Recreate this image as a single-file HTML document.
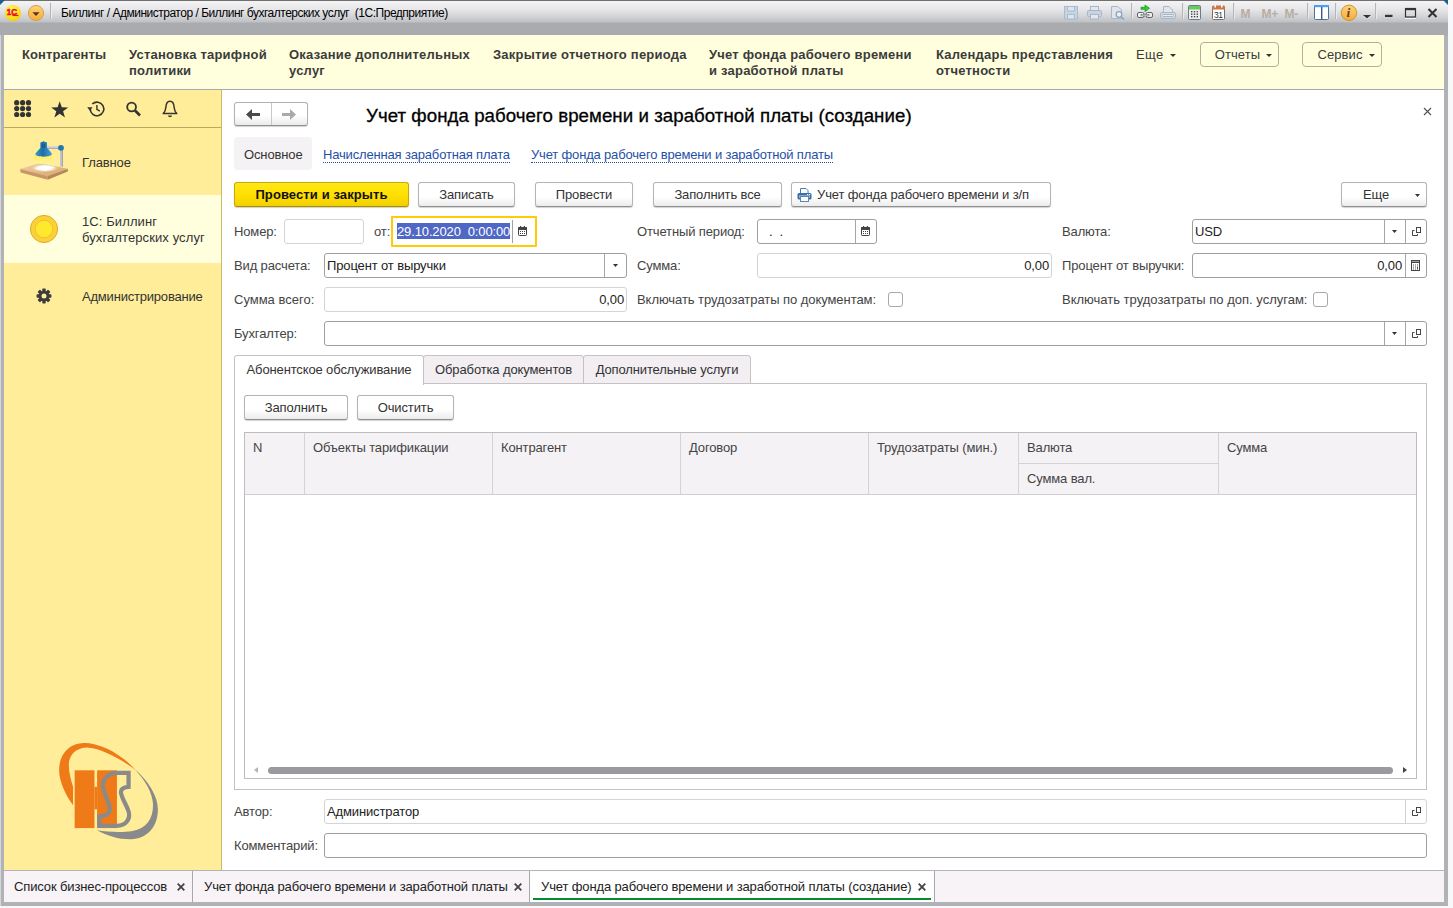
<!DOCTYPE html>
<html lang="ru">
<head>
<meta charset="utf-8">
<title>Биллинг</title>
<style>
*{box-sizing:border-box;margin:0;padding:0}
html,body{width:1453px;height:908px;overflow:hidden;background:#f8f8fa}
body{font-family:"Liberation Sans",sans-serif;font-size:13px;color:#333;position:relative;letter-spacing:-.13px}
.abs{position:absolute}
#frame{position:absolute;left:0;top:0;width:1448px;height:906px;background:#b1b2b5}
#titlebar{position:absolute;left:0;top:0;width:1448px;height:35px;background:linear-gradient(#707070 0,#707070 1px,#f4f4f5 1px,#e8e8ea 9px,#d4d5d8 16px,#bfc1c5 22px,#a9abaf 23px,#a9abaf 35px)}
#tbtext{position:absolute;left:61px;top:6px;font-size:12px;line-height:14px;color:#000;letter-spacing:-.49px;white-space:nowrap}
#sections{position:absolute;left:4px;top:35px;width:1440px;height:55px;background:#ffffde;border-bottom:1px solid #a9a9a9}
.sec{position:absolute;top:12px;font-weight:bold;font-size:13px;line-height:16px;color:#3b3b3b;white-space:nowrap;letter-spacing:.22px}
.secbtn{position:absolute;top:7px;height:25px;padding-left:8px;letter-spacing:.1px;border:1px solid #b3b095;border-radius:4px;font-size:13px;line-height:23px;color:#3b3b3b;text-align:center;background:#ffffde}
.caret{display:inline-block;width:0;height:0;border-left:3px solid transparent;border-right:3px solid transparent;border-top:3px solid #333;vertical-align:middle;margin-left:6px;position:relative;top:0}
#left{position:absolute;left:4px;top:90px;width:218px;height:781px;background:#ffed9a;border-right:1px solid #c9b96a}
#lefttools{position:absolute;left:0;top:0;width:217px;height:38px;border-bottom:1px solid #b9a95e}
.navitem{position:absolute;left:0;width:217px;height:67px;font-size:13px;line-height:16px;color:#333}
.navitem .t{position:absolute;left:78px;margin-top:1px}
#main{position:absolute;left:222px;top:90px;width:1222px;height:781px;background:#fff}
#bottombar{position:absolute;left:4px;top:870px;width:1440px;height:32px;background:#f7f3f7;border-top:1px solid #b4b4b8}
.btab{position:absolute;top:0;height:31px;line-height:31px;font-size:13px;color:#222;white-space:nowrap;border-right:1px solid #a9a9ad;padding-left:10px}
.btab .x{position:absolute;top:0;font-weight:bold;font-size:12px}
.lbl{position:absolute;margin-top:1px;font-size:13px;line-height:16px;color:#444;white-space:nowrap}
.fld{position:absolute;height:25px;border:1px solid #d4d4d4;border-radius:3px;background:#fff;font-size:13px;line-height:23px;color:#222;white-space:nowrap;padding:0 2px}
.fld.dk{border-color:#9f9f9f}
.btn{position:absolute;height:25px;border:1px solid #b4b4b4;border-bottom-color:#8f8f8f;border-radius:3px;background:linear-gradient(#fff,#fff 60%,#ececec);font-size:13px;line-height:23px;color:#333;text-align:center;white-space:nowrap;box-shadow:0 1px 1px rgba(0,0,0,.18)}
.chk{position:absolute;width:15px;height:15px;border:1px solid #a8a8a8;border-radius:3px;background:#fff}
.sep{position:absolute;top:0;width:1px;height:23px;background:#d0d0d0}
.dk .sep{background:#a6a6a6}
.dd{position:absolute;width:5px;height:3px;background:#333;clip-path:polygon(0 0,100% 0,50% 100%)}
.lnk{color:#1f50a8;border-bottom:1px dotted #1f50a8;line-height:15px;letter-spacing:-.17px}
.tab{position:absolute;top:355px;height:29px;border:1px solid #c3c3c3;background:#f2eef2;font-size:13px;line-height:27px;color:#333;text-align:center;white-space:nowrap;border-radius:3px 3px 0 0}
.vl{position:absolute;top:0;width:1px;height:62px;background:#d3d3d3}
</style>
</head>
<body>
<div id="frame"><div class="abs" style="left:0;top:23px;width:1px;height:883px;background:#d6d6d8"></div></div>
<div id="titlebar">
  <div class="abs" style="left:0;top:0;width:5px;height:5px;background:#1d5f8a;clip-path:polygon(0 0,100% 0,0 100%)"></div><div class="abs" style="left:1443px;top:0;width:5px;height:5px;background:#1d5f8a;clip-path:polygon(0 0,100% 0,100% 100%)"></div>
  <svg class="abs" style="left:0;top:0" width="1448" height="35" viewBox="0 0 1448 35" font-family="Liberation Sans, sans-serif">
    <defs>
      <radialGradient id="g1c" cx=".45" cy=".35" r=".7"><stop offset="0" stop-color="#fff78a"/><stop offset=".6" stop-color="#ffe420"/><stop offset="1" stop-color="#f5c800"/></radialGradient>
      <linearGradient id="gor" x1="0" y1="0" x2="0" y2="1"><stop offset="0" stop-color="#ffd27a"/><stop offset="1" stop-color="#fbab35"/></linearGradient>
    </defs>
    <circle cx="13" cy="13" r="8" fill="url(#g1c)"/>
    <text x="6.800" y="15.200" font-size="8.200" font-weight="bold" fill="#e8141c" stroke="#e8141c" stroke-width=".55" letter-spacing="-.2">1С</text>
    <rect x="12.400" y="14.800" width="6" height="1.300" fill="#e8141c"/>
    <circle cx="36" cy="13" r="7.6" fill="url(#gor)" stroke="#c9a040" stroke-width=".9"/>
    <path d="M32.4 12.3 H39.6 L36 16 Z" fill="#4a3a20"/>
    <rect x="50" y="3" width="1" height="16" fill="#b4b5b8"/><rect x="51" y="3" width="1" height="16" fill="#eeeef0"/>
    <g fill="#b4b5b8">
      <rect x="1131" y="3" width="1" height="16"/><rect x="1182" y="3" width="1" height="16"/><rect x="1233" y="3" width="1" height="16"/><rect x="1307" y="3" width="1" height="16"/><rect x="1335" y="3" width="1" height="16"/><rect x="1375" y="3" width="1" height="16"/>
    </g>
    <g fill="#e9e9eb">
      <rect x="1132" y="3" width="1" height="16"/><rect x="1183" y="3" width="1" height="16"/><rect x="1234" y="3" width="1" height="16"/><rect x="1308" y="3" width="1" height="16"/><rect x="1336" y="3" width="1" height="16"/><rect x="1376" y="3" width="1" height="16"/>
    </g>
    <!-- save (disabled) -->
    <g stroke="#a9bbd0" fill="#c9d4e2" stroke-width="1">
      <rect x="1064.5" y="6.5" width="13" height="12.5"/>
      <rect x="1067.5" y="6.5" width="7" height="4.5" fill="#dde4ec"/>
      <rect x="1067.5" y="14.5" width="7" height="4.5" fill="#dde4ec"/>
    </g>
    <!-- printer (disabled) -->
    <g stroke="#a7b6c8" fill="#c9d3df" stroke-width="1">
      <rect x="1090.5" y="6.5" width="8" height="5" fill="#e4e8ee"/>
      <rect x="1087.5" y="10.5" width="14" height="6" rx="1"/>
      <rect x="1090.500" y="14.500" width="8" height="4.500" fill="#e4e8ee"/>
    </g>
    <!-- preview (disabled) -->
    <g stroke="#a7b6c8" fill="#e0e5ec" stroke-width="1">
      <path d="M1111.500 6.500 H1118 L1121.500 10 V18.500 H1111.500 Z"/>
      <circle cx="1119" cy="14.500" r="2.800" fill="#eef1f5" stroke="#8fa3bb" stroke-width="1.300"/>
      <path d="M1121 16.500 L1124 19.500" stroke="#8fa3bb" stroke-width="1.600"/>
    </g>
    <!-- link with arrow -->
    <path d="M1141 7.300 H1145 V5 L1149.500 8.300 L1145 11.600 V9.300 H1141 Z" fill="#2ed02e" stroke="#0f8f1a" stroke-width=".7"/>
    <g fill="#f2f2f2" stroke="#5f6368" stroke-width="1">
      <rect x="1137.500" y="12.500" width="6.500" height="5" rx="1.500"/><rect x="1146" y="12.500" width="6.500" height="5" rx="1.500"/>
    </g>
    <rect x="1141" y="14.300" width="8" height="1.600" fill="#f8f8f8" stroke="#5f6368" stroke-width=".6"/>
    <!-- disabled link/print -->
    <g stroke="#a9b6c6" fill="#d4dbe4" stroke-width="1">
      <path d="M1163.500 6.500 H1169 L1172.500 10 V14 H1163.500 Z" fill="#e3e7ed"/>
      <rect x="1160.500" y="12.500" width="15" height="6" rx="1.500"/>
      <rect x="1163" y="14.500" width="10" height="2" fill="#e8ecf0"/>
    </g>
    <!-- calculator -->
    <rect x="1188.500" y="5.500" width="12" height="14" rx="1" fill="#eceff1" stroke="#6f7a84" stroke-width="1"/>
    <rect x="1189" y="6" width="11" height="3.500" fill="#5fce5f"/>
    <g fill="#444"><rect x="1191" y="11" width="1.400" height="1.400"/><rect x="1193.800" y="11" width="1.400" height="1.400"/><rect x="1191" y="13.500" width="1.400" height="1.400"/><rect x="1193.800" y="13.500" width="1.400" height="1.400"/><rect x="1196.600" y="13.500" width="1.400" height="1.400"/><rect x="1191" y="16" width="1.400" height="1.400"/><rect x="1193.800" y="16" width="1.400" height="1.400"/><rect x="1196.600" y="16" width="1.400" height="1.400"/></g>
    <rect x="1196.600" y="11" width="1.400" height="1.400" fill="#e02020"/>
    <!-- calendar -->
    <rect x="1212.500" y="6.500" width="12" height="13" rx="1" fill="#fff" stroke="#7a7068" stroke-width="1"/>
    <path d="M1212 7 Q1212 5.500 1213.500 5.500 H1223.500 Q1225 5.500 1225 7 V9.500 H1212 Z" fill="#c9774a"/>
    <rect x="1214.500" y="4.500" width="1.500" height="3" fill="#fff"/><rect x="1221" y="4.500" width="1.500" height="3" fill="#fff"/>
    <text x="1214" y="18" font-size="8.500" fill="#333" letter-spacing="-.5">31</text>
    <!-- M M+ M- -->
    <g font-size="12" font-weight="bold" fill="#b7ada3" letter-spacing="-.3">
      <text x="1240.500" y="18">M</text><text x="1261.500" y="18">M+</text><text x="1284.500" y="18">M-</text>
    </g>
    <!-- panels -->
    <rect x="1314.500" y="5.500" width="14" height="14" rx="1" fill="#fff" stroke="#4f6f9c" stroke-width="1"/>
    <rect x="1314" y="5" width="15" height="2.200" fill="#4aa0ff"/>
    <rect x="1321" y="7" width="1.400" height="12.500" fill="#3c5a86"/>
    <!-- info -->
    <circle cx="1349" cy="12.800" r="7.700" fill="url(#gor)" stroke="#c69a2e" stroke-width="1"/>
    <text x="1346.600" y="17.400" font-family="Liberation Serif, serif" font-size="13.500" font-weight="bold" font-style="italic" fill="#5a4a30">i</text>
    <path d="M1363 16 H1371 L1367 19.500 Z" fill="#f2f2f2"/>
    <path d="M1363 15 H1371 L1367 18.500 Z" fill="#333"/>
    <!-- window buttons -->
    <rect x="1385" y="16" width="7.500" height="1" fill="#f4f4f4"/>
    <rect x="1385" y="14.800" width="7.500" height="2.200" fill="#333"/>
    <rect x="1405.500" y="9.500" width="10" height="9" fill="none" stroke="#f4f4f4" stroke-width="1"/>
    <rect x="1405.500" y="8.500" width="10" height="8.500" fill="none" stroke="#333" stroke-width="1.200"/>
    <rect x="1405" y="8" width="11" height="2.200" fill="#333"/>
    <path d="M1428.500 9 L1436.500 17 M1436.500 9 L1428.500 17" stroke="#333" stroke-width="2.100" fill="none"/>
  </svg>
  <div id="tbtext">Биллинг / Администратор / Биллинг бухгалтерских услуг&nbsp; (1С:Предприятие)</div>
</div>
<div id="sections">
  <div class="sec" style="left:18px;letter-spacing:.08px">Контрагенты</div>
  <div class="sec" style="left:125px">Установка тарифной<br>политики</div>
  <div class="sec" style="left:285px">Оказание дополнительных<br>услуг</div>
  <div class="sec" style="left:489px">Закрытие отчетного периода</div>
  <div class="sec" style="left:705px">Учет фонда рабочего времени<br>и заработной платы</div>
  <div class="sec" style="left:932px">Календарь представления<br>отчетности</div>
  <div class="sec" style="left:1132px;font-weight:normal;letter-spacing:.35px">Еще<span class="caret"></span></div>
  <div class="secbtn" style="left:1196px;width:79px">Отчеты<span class="caret"></span></div>
  <div class="secbtn" style="left:1298px;width:80px">Сервис<span class="caret"></span></div>
</div>
<div id="left">
  <div id="lefttools">
    <svg class="abs" style="left:0;top:0" width="217" height="37" viewBox="4 90 217 37">
      <g fill="#333">
        <circle cx="16.7" cy="102.7" r="2.6"/><circle cx="22.6" cy="102.7" r="2.6"/><circle cx="28.5" cy="102.7" r="2.6"/>
        <circle cx="16.7" cy="108.6" r="2.6"/><circle cx="22.6" cy="108.6" r="2.6"/><circle cx="28.5" cy="108.6" r="2.6"/>
        <circle cx="16.7" cy="114.5" r="2.6"/><circle cx="22.6" cy="114.5" r="2.6"/><circle cx="28.5" cy="114.5" r="2.6"/>
        <path d="M59.7 101.2 L61.8 107.3 L68.2 107.4 L63.1 111.3 L65 117.4 L59.7 113.7 L54.4 117.4 L56.3 111.3 L51.2 107.4 L57.6 107.3 Z"/>
      </g>
      <g fill="none" stroke="#333" stroke-width="1.6">
        <path d="M90.2 109 A6.8 6.8 0 1 0 92.3 104"/>
        <path d="M96.9 105 V109.4 L99.8 111.2" stroke-width="1.4"/>
        <circle cx="131.6" cy="107" r="4.4" stroke-width="1.8"/>
        <path d="M135 110.5 L140 115.5" stroke-width="2.6"/>
        <path d="M163.2 113.6 H176.8 C174.6 111.8 174.4 110.5 174.2 107.5 C174 103.8 172.6 101.2 170 101.2 C167.4 101.2 166 103.8 165.8 107.5 C165.6 110.5 165.4 111.8 163.2 113.6 Z" stroke-width="1.5" stroke-linejoin="round"/>
      </g>
      <path d="M87.2 107.3 L92.6 107.3 L89.9 110.8 Z" fill="#333"/>
      <path d="M168 115.4 H172 A2 1.8 0 0 1 168 115.4 Z" fill="#333"/>
    </svg>
  </div>
  <div class="navitem" style="top:38px"><svg class="abs" style="left:6px;top:4px" width="70" height="58" viewBox="0 0 1096 908">
      <defs>
        <linearGradient id="lg1" x1="0" y1="0" x2="1" y2="0"><stop offset="0" stop-color="#3f9ad0"/><stop offset=".45" stop-color="#1d6ea6"/><stop offset="1" stop-color="#4aa3d6"/></linearGradient>
        <linearGradient id="lg2" x1="0" y1="0" x2="0" y2="1"><stop offset="0" stop-color="#ffee55" stop-opacity=".9"/><stop offset="1" stop-color="#fff6a0" stop-opacity=".5"/></linearGradient>
        <linearGradient id="lg3" x1="0" y1="0" x2="1" y2="1"><stop offset="0" stop-color="#efcfa8"/><stop offset="1" stop-color="#d6a56c"/></linearGradient>
        <radialGradient id="lg4"><stop offset="0" stop-color="#fff"/><stop offset=".55" stop-color="#fff" stop-opacity=".9"/><stop offset="1" stop-color="#fff3c0" stop-opacity="0"/></radialGradient>
      </defs>
      <polygon points="160,580 460,485 905,575 590,690" fill="url(#lg3)"/>
      <polygon points="160,580 590,690 590,748 165,636" fill="#c99667"/>
      <polygon points="590,690 905,575 905,618 590,748" fill="#b5875a"/>
      <polygon points="385,372 652,372 705,505 338,505" fill="url(#lg2)"/>
      <ellipse cx="545" cy="565" rx="210" ry="62" fill="url(#lg4)"/>
      <polygon points="392,575 522,526 702,550 560,606" fill="#fff"/>
      <rect x="783" y="280" width="42" height="262" fill="#c4c6cf"/>
      <rect x="812" y="280" width="13" height="262" fill="#8f929c"/>
      <rect x="575" y="222" width="190" height="40" fill="#cfd1d9"/>
      <rect x="575" y="250" width="190" height="12" fill="#9a9da6"/>
      <circle cx="798" cy="248" r="46" fill="#2777ae"/>
      <path d="M395,350 C402,318 452,282 475,250 L475,172 C475,148 580,148 580,172 L580,250 C612,282 650,318 658,350 C640,398 412,398 395,350Z" fill="url(#lg1)"/>
      <rect x="505" y="185" width="14" height="62" fill="#0f4f7d"/><rect x="535" y="185" width="14" height="62" fill="#0f4f7d"/>
      <rect x="518" y="140" width="10" height="20" fill="#1d6ea6"/>
    </svg><div class="t" style="top:26px">Главное</div></div>
  <div class="navitem" style="top:105px;height:68px;background:#ffffde"><svg class="abs" style="left:25px;top:19px" width="30" height="30" viewBox="0 0 30 30"><circle cx="15" cy="15" r="13.6" fill="#fdd03a" stroke="#dcae22" stroke-width="1"/><circle cx="15" cy="15" r="8.8" fill="#ffe92c" stroke="#ecc42e" stroke-width="1"/></svg><div class="t" style="top:18px;letter-spacing:.1px">1С: Биллинг<br>бухгалтерских услуг</div></div>
  <div class="navitem" style="top:172px"><svg class="abs" style="left:32px;top:26px" width="16" height="16" viewBox="-8 -8 16 16"><g fill="#3c3c3c"><circle r="5.3"/><rect x="-1.7" y="-7.4" width="3.4" height="14.8" rx=".6"/><rect x="-1.7" y="-7.4" width="3.4" height="14.8" rx=".6" transform="rotate(45)"/><rect x="-1.7" y="-7.4" width="3.4" height="14.8" rx=".6" transform="rotate(90)"/><rect x="-1.7" y="-7.4" width="3.4" height="14.8" rx=".6" transform="rotate(135)"/></g><circle r="2.5" fill="#ffed9a"/></svg><div class="t" style="top:26px;letter-spacing:-.2px">Администрирование</div></div>
  <svg class="abs" style="left:36px;top:640px" width="140" height="120" viewBox="0 0 1059 908">
    <path d="M250,570 C180,470 140,370 145,290 C150,170 230,100 330,98 C450,96 610,175 725,305 C640,238 470,134 350,132 C260,137 215,200 218,270 C220,330 235,380 250,430 Z" fill="#ee7a18"/>
    <path d="M715,295 C820,385 892,500 892,600 C892,745 800,824 690,826 C600,828 510,802 432,758 C520,772 620,776 700,764 C800,746 858,680 855,560 C848,470 800,385 715,295 Z" fill="#8a8a8a"/>
    <rect x="262" y="305" width="150" height="437" fill="#ee7a18"/>
    <rect x="412" y="430" width="20" height="170" fill="#ee7a18"/>
    <rect x="432" y="305" width="150" height="437" fill="#ee7a18"/>
    <path d="M670,325 H590 C500,325 465,390 478,440 C490,500 530,560 528,600 C525,640 490,652 448,655 V725 H580 C650,725 690,670 668,610 C650,560 615,510 612,470 C612,440 640,432 670,430 Z" fill="none" stroke="#8a8a8a" stroke-width="32" stroke-linejoin="miter"/>
  </svg>
</div>
<div id="main"></div>
<div id="content">
  <div class="abs" id="navbtn" style="left:234px;top:102px;width:74px;height:24px;border:1px solid #b2b2b2;border-bottom-color:#909090;border-radius:3px;background:linear-gradient(#fff,#fff 55%,#ebebeb);box-shadow:0 1px 1px rgba(0,0,0,.18)">
    <div class="abs" style="left:36px;top:0;width:1px;height:22px;background:#c8c8c8"></div>
    <svg class="abs" style="left:11px;top:6px" width="14" height="11" viewBox="0 0 14 11"><path d="M0 5.500 L6 0 V4 H14 V7 H6 V11 Z" fill="#4a4a4a"/></svg>
    <svg class="abs" style="left:47px;top:6px" width="14" height="11" viewBox="0 0 14 11"><path d="M14 5.500 L8 0 V4 H0 V7 H8 V11 Z" fill="#aaa8ac"/></svg>
  </div>
  <div class="abs" id="title" style="left:366px;top:105px;font-size:18.67px;line-height:22px;color:#000;white-space:nowrap;letter-spacing:.06px;-webkit-text-stroke:.3px #000">Учет фонда рабочего времени и заработной платы (создание)</div>
  <svg class="abs" style="left:1423px;top:107px" width="9" height="9" viewBox="0 0 9 9"><path d="M1 1 L8 8 M8 1 L1 8" stroke="#555" stroke-width="1.2" fill="none"/></svg>

  <div class="abs" style="left:234px;top:137px;width:78px;height:33px;background:#f5f2f5;border-radius:4px"></div>
  <div class="lbl" style="left:244px;top:146px;color:#333">Основное</div>
  <div class="lbl lnk" style="left:323px;top:146px">Начисленная заработная плата</div>
  <div class="lbl lnk" style="left:531px;top:146px">Учет фонда рабочего времени и заработной платы</div>

  <div class="btn" style="left:234px;top:182px;width:175px;background:linear-gradient(#ffe81a,#ffe000 50%,#f3d000);border-color:#c9a800;border-bottom-color:#a88c00;font-weight:bold;color:#111;letter-spacing:.1px">Провести и закрыть</div>
  <div class="btn" style="left:418px;top:182px;width:97px">Записать</div>
  <div class="btn" style="left:535px;top:182px;width:98px">Провести</div>
  <div class="btn" style="left:653px;top:182px;width:129px">Заполнить все</div>
  <div class="btn" style="left:791px;top:182px;width:260px;text-align:left;padding-left:25px"><svg class="abs" style="left:5px;top:5px" width="15" height="14" viewBox="0 0 15 14"><path d="M3.500 5 V.5 H9 L11 2.500 V5" fill="#fff" stroke="#4b7bb0"/><rect x=".5" y="5" width="14" height="6.500" rx="1.500" fill="#3b6ea5"/><rect x="2" y="7" width="11" height="3" fill="#86a9d0"/><rect x="3.500" y="8.500" width="8" height="5" fill="#fff" stroke="#5b86b8"/><rect x="10" y="6" width="1.200" height="1" fill="#fff"/><rect x="12" y="6" width="1.200" height="1" fill="#fff"/></svg>Учет фонда рабочего времени и з/п</div>
  <div class="btn" style="left:1341px;top:182px;width:86px;text-align:left;padding-left:21px">Еще<span class="dd" style="left:73px;top:11px"></span></div>

  <div class="lbl" style="left:234px;top:223px">Номер:</div>
  <div class="fld" style="left:284px;top:219px;width:80px"></div>
  <div class="lbl" style="left:374px;top:223px">от:</div>
  <div class="abs" style="left:391px;top:216px;width:146px;height:31px;border:2px solid #ffca08;border-radius:1px;background:#fff"></div>
  <div class="abs" style="left:397px;top:223px;width:113px;height:16px;background:#4f68c6"></div>
  <div class="lbl" style="left:397px;top:223px;color:#fff;width:113px;overflow:hidden">29.10.2020&nbsp; 0:00:00</div>
  <div class="abs" style="left:512px;top:220px;width:1px;height:23px;background:#a2a2a6"></div><svg class="abs" style="left:518px;top:226px" width="9" height="10" viewBox="0 0 9 10"><rect x=".5" y="1.500" width="8" height="8" rx=".8" fill="#fff" stroke="#444"/><rect x="0" y="1" width="9" height="3" rx=".6" fill="#444"/><rect x="2" y="0" width="1.200" height="2.200" fill="#444"/><rect x="5.800" y="0" width="1.200" height="2.200" fill="#444"/><g fill="#444"><rect x="2" y="5" width="1" height="1"/><rect x="4" y="5" width="1" height="1"/><rect x="6" y="5" width="1" height="1"/><rect x="2" y="7" width="1" height="1"/><rect x="4" y="7" width="1" height="1"/><rect x="6" y="7" width="1" height="1"/></g></svg>

  <div class="lbl" style="left:637px;top:223px">Отчетный период:</div>
  <div class="fld dk" style="left:757px;top:219px;width:120px"><span style="padding-left:9px">.&nbsp; .</span><div class="sep" style="left:97px"></div><svg class="abs" style="left:103px;top:6px" width="9" height="10" viewBox="0 0 9 10"><rect x=".5" y="1.500" width="8" height="8" rx=".8" fill="#fff" stroke="#444"/><rect x="0" y="1" width="9" height="3" rx=".6" fill="#444"/><rect x="2" y="0" width="1.200" height="2.200" fill="#444"/><rect x="5.800" y="0" width="1.200" height="2.200" fill="#444"/><g fill="#444"><rect x="2" y="5" width="1" height="1"/><rect x="4" y="5" width="1" height="1"/><rect x="6" y="5" width="1" height="1"/><rect x="2" y="7" width="1" height="1"/><rect x="4" y="7" width="1" height="1"/><rect x="6" y="7" width="1" height="1"/></g></svg></div>
  <div class="lbl" style="left:1062px;top:223px">Валюта:</div>
  <div class="fld dk" style="left:1192px;top:219px;width:235px">USD<div class="sep" style="left:191px"></div><div class="sep" style="left:212px"></div><span class="dd" style="left:199px;top:10px"></span><svg class="abs" style="left:219px;top:7px" width="10" height="10" viewBox="0 0 10 10"><rect x="4.500" y=".5" width="4" height="5" fill="none" stroke="#444"/><path d="M2.500 3.500 H.5 V8.500 H5.500 V7" fill="none" stroke="#444"/></svg></div>

  <div class="lbl" style="left:234px;top:257px">Вид расчета:</div>
  <div class="fld dk" style="left:324px;top:253px;width:303px">Процент от выручки<div class="sep" style="left:279px"></div><span class="dd" style="left:288px;top:10px"></span></div>
  <div class="lbl" style="left:637px;top:257px">Сумма:</div>
  <div class="fld" style="left:757px;top:253px;width:295px;text-align:right">0,00</div>
  <div class="lbl" style="left:1062px;top:257px">Процент от выручки:</div>
  <div class="fld dk" style="left:1192px;top:253px;width:235px;text-align:right;padding-right:24px">0,00<div class="sep" style="left:212px"></div><svg class="abs" style="left:218px;top:6px" width="9" height="11" viewBox="0 0 9 11"><rect x=".5" y=".5" width="8" height="10" fill="#fff" stroke="#444"/><rect x="1" y="1.500" width="7" height="1.500" fill="#444"/><g fill="#555"><rect x="2" y="4.500" width="1" height="1"/><rect x="4" y="4.500" width="1" height="1"/><rect x="6" y="4.500" width="1" height="1"/><rect x="2" y="6.500" width="1" height="1"/><rect x="4" y="6.500" width="1" height="1"/><rect x="6" y="6.500" width="1" height="3"/><rect x="2" y="8.500" width="1" height="1"/><rect x="4" y="8.500" width="1" height="1"/></g></svg></div>

  <div class="lbl" style="left:234px;top:291px;letter-spacing:0">Сумма всего:</div>
  <div class="fld" style="left:324px;top:287px;width:303px;text-align:right">0,00</div>
  <div class="lbl" style="left:637px;top:291px;letter-spacing:-.06px">Включать трудозатраты по документам:</div>
  <div class="chk" style="left:888px;top:292px"></div>
  <div class="lbl" style="left:1062px;top:291px;letter-spacing:0">Включать трудозатраты по доп. услугам:</div>
  <div class="chk" style="left:1313px;top:292px"></div>

  <div class="lbl" style="left:234px;top:325px">Бухгалтер:</div>
  <div class="fld dk" style="left:324px;top:321px;width:1103px"><div class="sep" style="left:1059px"></div><div class="sep" style="left:1080px"></div><span class="dd" style="left:1067px;top:10px"></span><svg class="abs" style="left:1087px;top:7px" width="10" height="10" viewBox="0 0 10 10"><rect x="4.500" y=".5" width="4" height="5" fill="none" stroke="#444"/><path d="M2.500 3.500 H.5 V8.500 H5.500 V7" fill="none" stroke="#444"/></svg></div>

  <div class="abs" style="left:234px;top:383px;width:1193px;height:407px;border:1px solid #c3c3c3;background:#fff"></div>
  <div class="tab" style="left:234px;width:190px;height:30px;background:#fff;border-bottom:none">Абонентское обслуживание</div>
  <div class="tab" style="left:423px;width:161px">Обработка документов</div>
  <div class="tab" style="left:583px;width:168px">Дополнительные услуги</div>

  <div class="btn" style="left:244px;top:395px;width:104px">Заполнить</div>
  <div class="btn" style="left:357px;top:395px;width:97px">Очистить</div>

  <div class="abs" id="grid" style="left:244px;top:432px;width:1173px;height:347px;border:1px solid #bdbdbd;background:#fff">
    <div class="abs" style="left:0;top:0;width:1171px;height:62px;background:#f5f2f5;border-bottom:1px solid #cfcfcf"></div>
    <div class="vl" style="left:59px"></div><div class="vl" style="left:247px"></div><div class="vl" style="left:435px"></div><div class="vl" style="left:623px"></div><div class="vl" style="left:773px"></div><div class="vl" style="left:973px"></div>
    <div class="abs" style="left:774px;top:30px;width:199px;height:1px;background:#d3d3d3"></div>
    <div class="lbl" style="left:8px;top:6px">N</div>
    <div class="lbl" style="left:68px;top:6px">Объекты тарификации</div>
    <div class="lbl" style="left:256px;top:6px">Контрагент</div>
    <div class="lbl" style="left:444px;top:6px">Договор</div>
    <div class="lbl" style="left:632px;top:6px">Трудозатраты (мин.)</div>
    <div class="lbl" style="left:782px;top:6px">Валюта</div>
    <div class="lbl" style="left:782px;top:37px">Сумма вал.</div>
    <div class="lbl" style="left:982px;top:6px">Сумма</div>
    <div class="abs" style="left:23px;top:334px;width:1125px;height:7px;border-radius:3.5px;background:#9c9a9e"></div>
    <div class="abs" style="left:9px;top:334px;width:0;height:0;border-top:3px solid transparent;border-bottom:3px solid transparent;border-right:4px solid #b5b5b5"></div>
    <div class="abs" style="left:1158px;top:334px;width:0;height:0;border-top:3px solid transparent;border-bottom:3px solid transparent;border-left:4px solid #444"></div>
  </div>

  <div class="lbl" style="left:234px;top:803px">Автор:</div>
  <div class="fld" style="left:324px;top:799px;width:1103px">Администратор<div class="sep" style="left:1080px"></div><svg class="abs" style="left:1087px;top:7px" width="10" height="10" viewBox="0 0 10 10"><rect x="4.500" y=".5" width="4" height="5" fill="none" stroke="#444"/><path d="M2.500 3.500 H.5 V8.500 H5.500 V7" fill="none" stroke="#444"/></svg></div>
  <div class="lbl" style="left:234px;top:837px">Комментарий:</div>
  <div class="fld dk" style="left:324px;top:833px;width:1103px"></div>
</div>
<div id="bottombar">
  <div class="btab" style="left:0;width:189px">Список бизнес-процессов<svg class="abs" style="left:173px;top:12px" width="8" height="8" viewBox="0 0 8 8"><path d="M.7 .7 L7.300 7.300 M7.300 .7 L.7 7.300" stroke="#444" stroke-width="1.800" fill="none"/></svg></div>
  <div class="btab" style="left:189px;width:337px;padding-left:11px">Учет фонда рабочего времени и заработной платы<svg class="abs" style="left:321px;top:12px" width="8" height="8" viewBox="0 0 8 8"><path d="M.7 .7 L7.300 7.300 M7.300 .7 L.7 7.300" stroke="#444" stroke-width="1.800" fill="none"/></svg></div>
  <div class="btab" style="left:526px;width:405px;background:#fff;padding-left:11px">Учет фонда рабочего времени и заработной платы (создание)<svg class="abs" style="left:388px;top:12px" width="8" height="8" viewBox="0 0 8 8"><path d="M.7 .7 L7.300 7.300 M7.300 .7 L.7 7.300" stroke="#444" stroke-width="1.800" fill="none"/></svg><div class="abs" style="left:3px;top:27px;width:398px;height:2px;background:#058b31"></div></div>
</div>
</body>
</html>
